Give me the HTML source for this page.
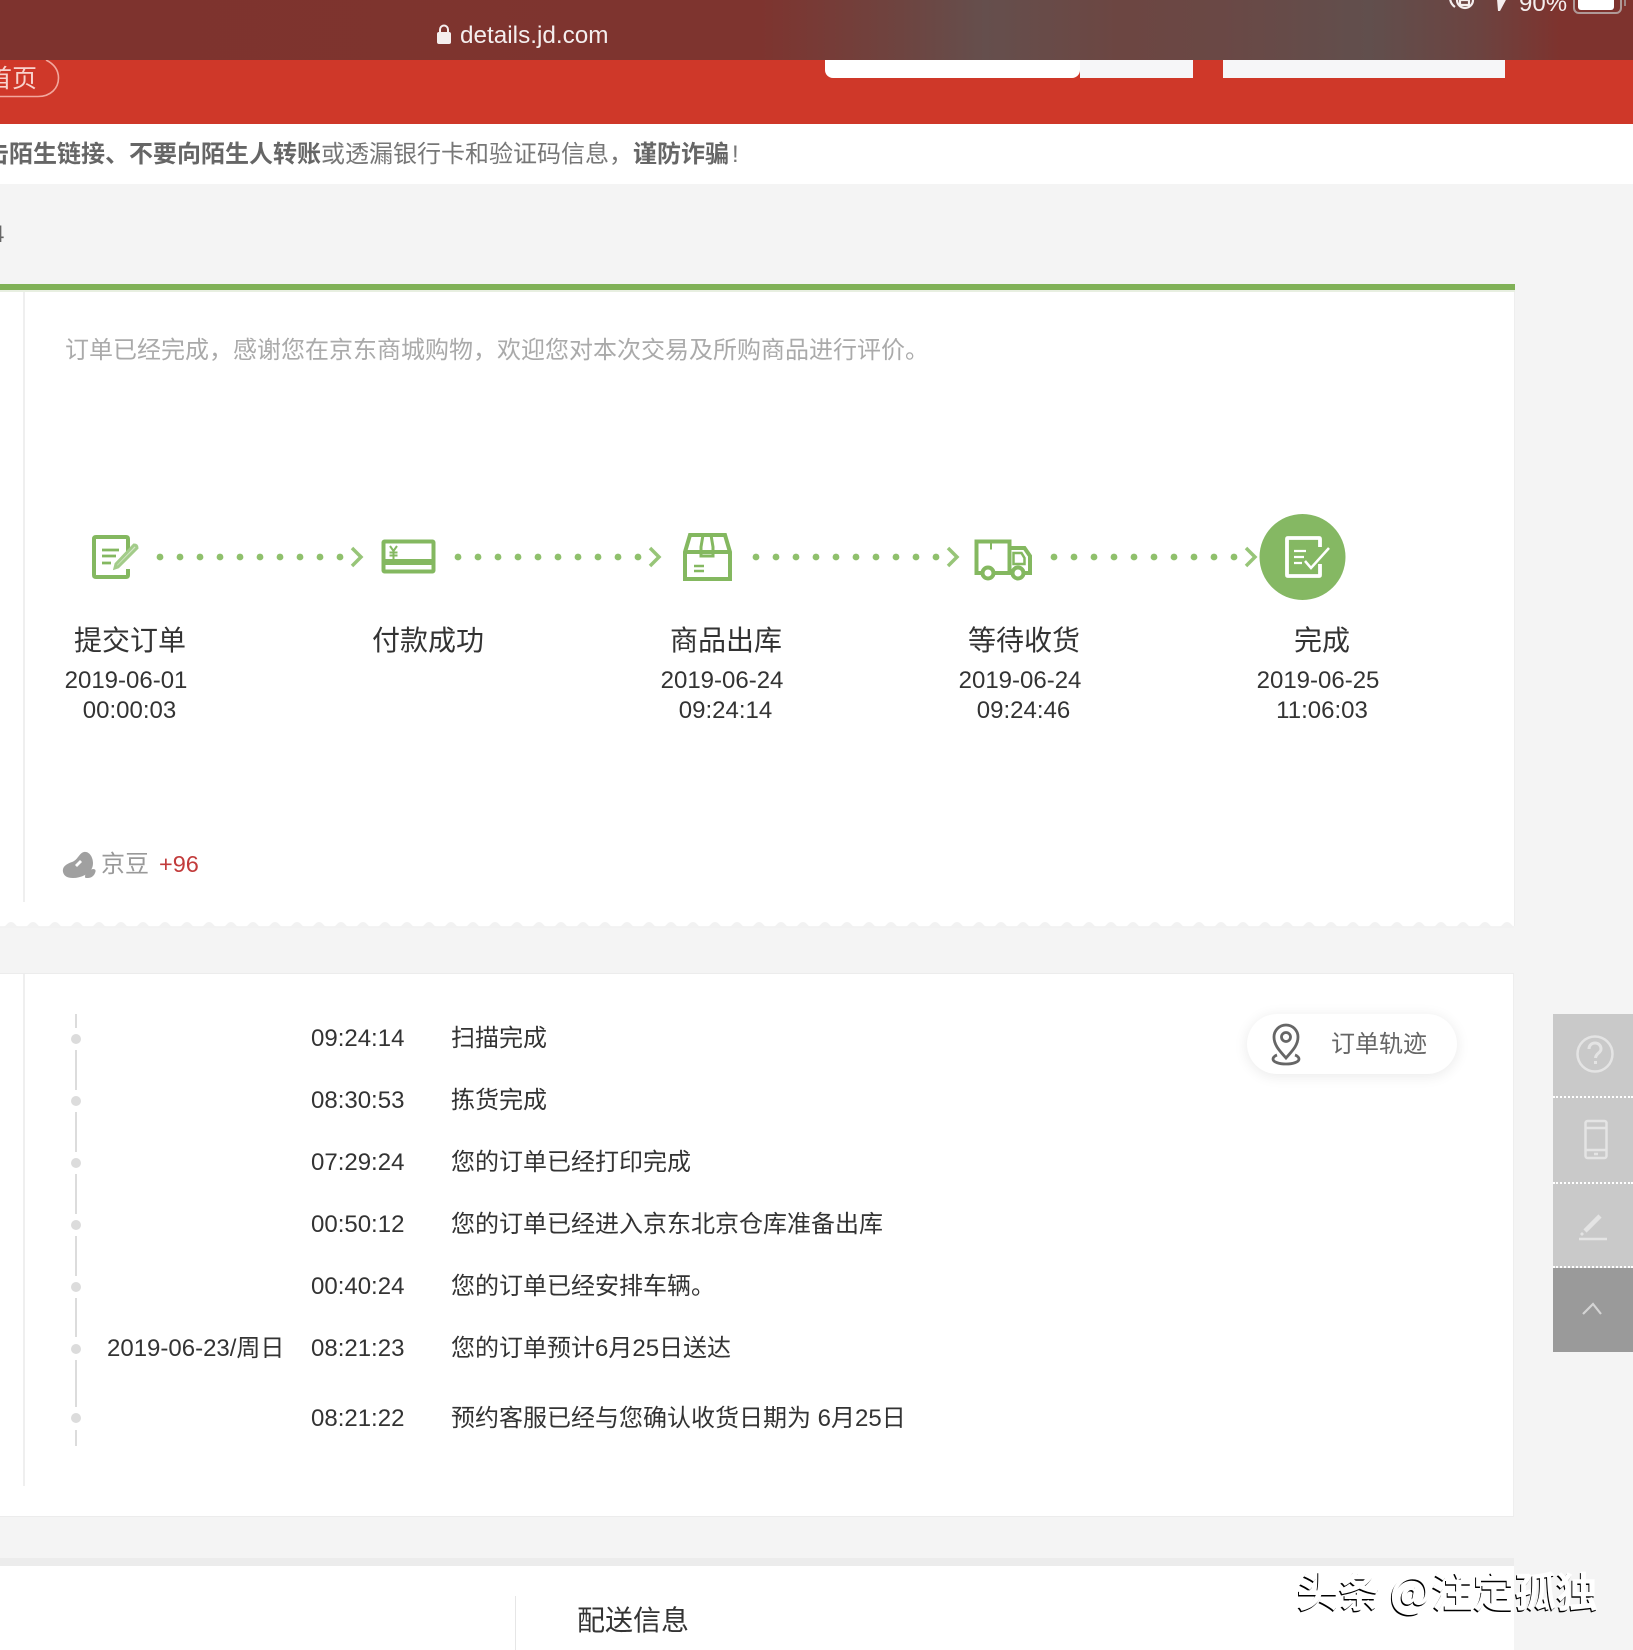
<!DOCTYPE html>
<html lang="zh">
<head>
<meta charset="utf-8">
<title>details.jd.com</title>
<style>
html,body{margin:0;padding:0;background:#f4f4f4;}
#p{position:relative;width:1633px;height:1650px;overflow:hidden;background:#f4f4f4;font-family:"Liberation Sans","Noto Sans CJK SC",sans-serif;color:#333;font-size:24px;}
.a{position:absolute;}
.t{position:absolute;white-space:nowrap;line-height:30px;height:30px;}
.c{position:absolute;white-space:nowrap;transform:translateX(-50%);text-align:center;}
.lab{font-size:28px;line-height:36px;top:623px;color:#333;}
.d1{top:666px;line-height:30px;}
.d2{top:696px;line-height:30px;}
.tm{left:311px;}
.ms{left:451px;}
svg{position:absolute;left:0;top:0;}
</style>
</head>
<body>
<div id="p">
<!-- top -->
<div class="a" style="left:0;top:60px;width:1633px;height:64px;background:#cf3829;"></div>
<div class="a" style="left:825px;top:50px;width:255px;height:28px;background:#fff;border-radius:0 0 8px 8px;"></div>
<div class="a" style="left:1080px;top:50px;width:113px;height:28px;background:#f6f6f8;"></div>
<div class="a" style="left:1223px;top:50px;width:282px;height:28px;background:#f6f6f8;"></div>
<svg width="70" height="110" viewBox="0 0 70 110" fill="none"><path d="M-5 96.500H38C51 96.500 58.500 88 58.500 78C58.500 70 54 64 46 60" stroke="#f2a79d" stroke-width="1.600"/></svg>
<div class="t" style="left:-13px;top:63px;color:#f8d3cd;font-size:25px;line-height:32px;height:32px;">首页</div>
<div class="a" style="left:0;top:0;width:1633px;height:60px;background:linear-gradient(90deg,#7e332e 0,#7e342f 760px,#6e4440 900px,#654f4d 985px,#6c4642 1120px,#6a4845 1220px,#614f4d 1370px,#6c4340 1480px,#7e332e 1560px,#7e332e 1633px);"></div>
<div class="t" style="left:460px;top:21px;color:#f4eeee;font-size:24.3px;">details.jd.com</div>
<div class="t" style="left:1519px;top:-11px;color:#f4eeee;">90%</div>

<!-- notice -->
<div class="a" style="left:0;top:124px;width:1633px;height:60px;background:#fff;"></div>
<div class="t" style="left:-39px;top:140px;color:#777;"><b style="color:#666;">点击陌生链接、不要向陌生人转账</b>或透漏银行卡和验证码信息，<b style="color:#666;">谨防诈骗</b><span style="margin-left:3px">!</span></div>
<div class="t" style="left:-9px;top:220px;color:#666;">4</div>

<!-- card 1 -->
<div class="a" style="left:0;top:284px;width:1515px;height:6px;background:#80b157;"></div>
<div class="a" style="left:0;top:290px;width:1515px;height:2px;background:#e8efe1;"></div>
<div class="a" style="left:0;top:292px;width:1514px;height:634px;background:#fff;border-right:1px solid #eee;"></div>
<div class="a" style="left:23px;top:292px;width:2px;height:610px;background:#efefef;"></div>
<div class="t" style="left:65px;top:336px;color:#aaa;">订单已经完成，感谢您在京东商城购物，欢迎您对本次交易及所购商品进行评价。</div>

<div class="c lab" style="left:130px;">提交订单</div>
<div class="c lab" style="left:428px;">付款成功</div>
<div class="c lab" style="left:726px;">商品出库</div>
<div class="c lab" style="left:1024px;">等待收货</div>
<div class="c lab" style="left:1322px;">完成</div>

<div class="c d1" style="left:126px;">2019-06-01</div><div class="c d2" style="left:129.5px;">00:00:03</div>
<div class="c d1" style="left:722px;">2019-06-24</div><div class="c d2" style="left:725.500px;">09:24:14</div>
<div class="c d1" style="left:1020px;">2019-06-24</div><div class="c d2" style="left:1023.500px;">09:24:46</div>
<div class="c d1" style="left:1318px;">2019-06-25</div><div class="c d2" style="left:1322px;">11:06:03</div>

<div class="t" style="left:101px;top:850px;color:#999;">京豆</div>
<div class="t" style="left:159px;top:849px;color:#c23b3b;font-size:23.5px;">+96</div>

<!-- card 2 -->
<div class="a" style="left:0;top:973px;width:1514px;height:544px;background:#fff;border-top:1px solid #ececec;border-bottom:1px solid #ececec;border-right:1px solid #eee;box-sizing:border-box;"></div>
<div class="a" style="left:23px;top:974px;width:2px;height:512px;background:#efefef;"></div>

<div class="t tm" style="top:1024px;">09:24:14</div><div class="t ms" style="top:1024px;">扫描完成</div>
<div class="t tm" style="top:1086px;">08:30:53</div><div class="t ms" style="top:1086px;">拣货完成</div>
<div class="t tm" style="top:1148px;">07:29:24</div><div class="t ms" style="top:1148px;">您的订单已经打印完成</div>
<div class="t tm" style="top:1210px;">00:50:12</div><div class="t ms" style="top:1210px;">您的订单已经进入京东北京仓库准备出库</div>
<div class="t tm" style="top:1272px;">00:40:24</div><div class="t ms" style="top:1272px;">您的订单已经安排车辆。</div>
<div class="t" style="left:107px;top:1334px;">2019-06-23/周日</div>
<div class="t tm" style="top:1334px;">08:21:23</div><div class="t ms" style="top:1334px;">您的订单预计6月25日送达</div>
<div class="t tm" style="top:1404px;">08:21:22</div><div class="t ms" style="top:1404px;">预约客服已经与您确认收货日期为 6月25日</div>

<!-- pill -->
<div class="a" style="left:1247px;top:1014px;width:210px;height:60px;border-radius:30px;background:#fff;box-shadow:0 2px 14px rgba(0,0,0,.09);"></div>
<div class="t" style="left:1331px;top:1030px;color:#666;">订单轨迹</div>

<!-- card 3 -->
<div class="a" style="left:0;top:1558px;width:1514px;height:8px;background:#ececec;"></div>
<div class="a" style="left:0;top:1566px;width:1514px;height:84px;background:#fff;"></div>
<div class="a" style="left:515px;top:1596px;width:1px;height:54px;background:#e6e6e6;"></div>
<div class="t" style="left:577px;top:1603px;font-size:28px;line-height:36px;height:36px;">配送信息</div>

<!-- side -->
<div class="a" style="left:1553px;top:1014px;width:80px;height:254px;background:#c9c9c9;"></div>
<div class="a" style="left:1553px;top:1268px;width:80px;height:84px;background:#9a9a9a;"></div>
<div class="a" style="left:1553px;top:1096px;width:80px;border-top:2px dotted #fff;"></div>
<div class="a" style="left:1553px;top:1182px;width:80px;border-top:2px dotted #fff;"></div>
<div class="a" style="left:1553px;top:1266px;width:80px;border-top:2px dotted #fff;"></div>

<svg width="1633" height="1650" viewBox="0 0 1633 1650" fill="none">
<!-- status icons -->
<g stroke="#f4eeee" stroke-width="2.200">
<circle cx="1465" cy="0" r="8"/><path d="M1450 -2a12 12 0 0 0 5 9M1460 0h9v5h-9z"/>
</g>
<path d="M1488 -2h19l-7 13h-2l-1-12z" fill="#f4eeee"/>
<rect x="1574" y="-10" width="47" height="23" rx="5" stroke="#b09a98" stroke-width="2"/>
<rect x="1578" y="-8" width="36" height="18" rx="3" fill="#fff"/>
<path d="M1625 0v6" stroke="#a08886" stroke-width="2"/>
<!-- lock -->
<rect x="437" y="32" width="14" height="12" rx="2" fill="#f4eeee"/>
<path d="M440 33v-3.500a4 4 0 0 1 8 0v3.500" stroke="#f4eeee" stroke-width="2"/>

<!-- scallops -->
<defs><pattern id="sc" x="0" y="922" width="22" height="8" patternUnits="userSpaceOnUse"><path d="M0 5H3C6 5 7 0 11 0S16 5 19 5H22V8H0Z" fill="#f2f2f2"/></pattern></defs>
<rect x="0" y="922" width="1514" height="8" fill="url(#sc)"/>
<rect x="0" y="928" width="1514" height="3" fill="#f4f4f4"/>

<!-- dotted connectors -->
<g fill="#8fc06c">
<circle cx="160" cy="557" r="3.400"/><circle cx="180" cy="557" r="3.400"/><circle cx="200" cy="557" r="3.400"/><circle cx="220" cy="557" r="3.400"/><circle cx="240" cy="557" r="3.400"/><circle cx="260" cy="557" r="3.400"/><circle cx="280" cy="557" r="3.400"/><circle cx="300" cy="557" r="3.400"/><circle cx="320" cy="557" r="3.400"/><circle cx="340" cy="557" r="3.400"/>
<circle cx="458" cy="557" r="3.400"/><circle cx="478" cy="557" r="3.400"/><circle cx="498" cy="557" r="3.400"/><circle cx="518" cy="557" r="3.400"/><circle cx="538" cy="557" r="3.400"/><circle cx="558" cy="557" r="3.400"/><circle cx="578" cy="557" r="3.400"/><circle cx="598" cy="557" r="3.400"/><circle cx="618" cy="557" r="3.400"/><circle cx="638" cy="557" r="3.400"/>
<circle cx="756" cy="557" r="3.400"/><circle cx="776" cy="557" r="3.400"/><circle cx="796" cy="557" r="3.400"/><circle cx="816" cy="557" r="3.400"/><circle cx="836" cy="557" r="3.400"/><circle cx="856" cy="557" r="3.400"/><circle cx="876" cy="557" r="3.400"/><circle cx="896" cy="557" r="3.400"/><circle cx="916" cy="557" r="3.400"/><circle cx="936" cy="557" r="3.400"/>
<circle cx="1054" cy="557" r="3.400"/><circle cx="1074" cy="557" r="3.400"/><circle cx="1094" cy="557" r="3.400"/><circle cx="1114" cy="557" r="3.400"/><circle cx="1134" cy="557" r="3.400"/><circle cx="1154" cy="557" r="3.400"/><circle cx="1174" cy="557" r="3.400"/><circle cx="1194" cy="557" r="3.400"/><circle cx="1214" cy="557" r="3.400"/><circle cx="1234" cy="557" r="3.400"/>
</g>
<g stroke="#97c578" stroke-width="3.500">
<path d="M352 548l9 9-9 9M650 548l9 9-9 9M948 548l9 9-9 9M1246 548l9 9-9 9"/>
</g>

<!-- step 1 icon -->
<g stroke="#84b860" stroke-width="4">
<path d="M128 553V539q0-2-2-2H96q-2 0-2 2v36q0 2 2 2h30q2 0 2-2v-6"/>
<path d="M102 550h17M102 556h14M102 563h9" stroke-width="2.800"/>
<path d="M137 548l-19 19-3 1 1-4 18-19q3 0 3 3z" stroke="#a3cc8a" fill="#d5e6c8" stroke-width="3"/>
</g>
<!-- step 2 icon -->
<g>
<rect x="383.500" y="541.500" width="50" height="30" rx="1" stroke="#84b860" stroke-width="4"/>
<rect x="383" y="559" width="51" height="6" fill="#84b860"/>
<path d="M390 546l3.500 5 3.500-5M393.500 551v8M389.500 552.500h8M389.500 555.500h8" stroke="#84b860" stroke-width="2"/>
</g>
<!-- step 3 icon -->
<g stroke="#84b860" stroke-width="4">
<path d="M685 552l5-17h35l5 17v27h-45z"/>
<path d="M685 552h45"/>
<path d="M703 535l-2 12v9h12v-9l-2-12" stroke-width="3"/>
<path d="M694 566h10M694 571h10" stroke-width="2.500"/>
</g>
<!-- step 4 icon -->
<g stroke="#84b860" stroke-width="4">
<path d="M981 573h-4.500V541.500h33V573H1012"/>
<path d="M991 541.500v8" stroke-width="2"/>
<path d="M1009.500 548h15l5.500 8v17h-7"/>
<path d="M1013.500 553h8l3 5v6h-11z" stroke-width="2.500"/>
<circle cx="988" cy="573" r="5.500" fill="#fff"/>
<circle cx="1018" cy="573" r="5.500" fill="#fff"/>
<path d="M994 573h18"/>
</g>
<!-- step 5 -->
<circle cx="1302.500" cy="557" r="43" fill="#85b863"/>
<g stroke="#fff" stroke-width="3.800">
<path d="M1320 547v-8q0-1-1-1h-31q-1 0-1 1v36q0 1 1 1h31q1 0 1-1v-11"/>
<path d="M1294 551h12M1294 557h10M1294 563h8" stroke-width="2.300"/>
<path d="M1305 561l6 7 18-20" stroke-width="2.500"/>
</g>

<!-- bean -->
<path d="M63 872c-1-5 3-8 9-10 6-2 7-9 12-10 5-1 9 5 9 11 0 6-3 9-8 12-4 2-8 3-12 3-6 0-9-2-10-6z" fill="#a0a0a0"/>
<path d="M85 877c0-4 3-7 8-8 3 0 3 2 2 4-1 3-4 5-7 5-2 0-3 0-3-1z" fill="#a0a0a0"/>
<path d="M76 866l5-5" stroke="#fff" stroke-width="2.800"/>

<!-- timeline -->
<g stroke="#dcdcdc" stroke-width="2">
<path d="M76 1014v14M76 1050v40M76 1112v40M76 1174v40M76 1236v40M76 1298v39M76 1360v47M76 1430v16"/>
</g>
<g fill="#dcdcdc">
<ellipse cx="76" cy="1039" rx="5" ry="5"/><ellipse cx="76" cy="1101" rx="5" ry="5"/><ellipse cx="76" cy="1163" rx="5" ry="5"/><ellipse cx="76" cy="1225" rx="5" ry="5"/><ellipse cx="76" cy="1287" rx="5" ry="5"/><ellipse cx="76" cy="1349" rx="5" ry="5"/><ellipse cx="76" cy="1418" rx="5" ry="5"/>
</g>

<!-- pin -->
<g stroke="#666" stroke-width="2.800">
<path d="M1286 1058c-5-6-12-12-12-21a12 12 0 0 1 24 0c0 9-7 15-12 21z"/>
<circle cx="1286" cy="1037" r="4.500"/>
<path d="M1277 1055c-3 1-4 3-4 4 0 3 6 5 13 5s13-2 13-5c0-1-1-3-4-4"/>
</g>

<!-- side icons -->
<g stroke="#e4e4e4" stroke-width="2.500">
<circle cx="1595" cy="1054" r="17.500"/>
<path d="M1589 1049c0-8 12-8 12 0 0 4-5 4-5.500 9" stroke-width="3"/>
<path d="M1595.500 1061v3" stroke-width="3"/>
<rect x="1585.500" y="1121" width="21" height="37" rx="2"/>
<path d="M1586 1128h20M1586 1150h20M1594 1154h4"/>
<path d="M1579 1239h28" stroke-width="2.500"/>
<path d="M1585 1231l15-15" stroke-width="4.500"/>
<path d="M1581 1233l2 2" stroke-width="2.800"/>
<path d="M1583 1314l10-10 8 10" stroke="#d4d4d4" stroke-width="2.200"/>
</g>
</svg>

<!-- watermark -->
<div class="t" style="left:1297px;top:1563px;height:52px;line-height:52px;font-size:41.6px;font-weight:700;font-family:'Noto Sans CJK SC','Liberation Sans',sans-serif;color:#fff;text-shadow:-1px 1.500px 0 #000;">头条 @注定孤独</div>
</div>
</body>
</html>
